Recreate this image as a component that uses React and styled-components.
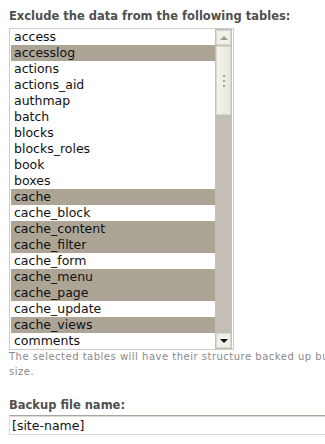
import React from 'react';
import styled, { createGlobalStyle } from 'styled-components';

const tables = [
  ['access', false],
  ['accesslog', true],
  ['actions', false],
  ['actions_aid', false],
  ['authmap', false],
  ['batch', false],
  ['blocks', false],
  ['blocks_roles', false],
  ['book', false],
  ['boxes', false],
  ['cache', true],
  ['cache_block', false],
  ['cache_content', true],
  ['cache_filter', true],
  ['cache_form', false],
  ['cache_menu', true],
  ['cache_page', true],
  ['cache_update', false],
  ['cache_views', true],
  ['comments', false],
];

const App = () => {
  return (
    <Page>
      <GlobalStyle />
      <Label>Exclude the data from the following tables:</Label>
      <ListBox>
        <Rows>
          {tables.map(([name, selected]) => (
            <Row key={name} selected={selected}>{name}</Row>
          ))}
        </Rows>
        <Scrollbar>
          <ScrollButton>
            <Arrow up />
          </ScrollButton>
          <Thumb>
            <Grip />
            <Grip />
            <Grip />
          </Thumb>
          <Track />
          <ScrollButton>
            <Arrow />
          </ScrollButton>
        </Scrollbar>
      </ListBox>
      <Description>
        <DescLine>The selected tables will have their structure backed up but not their contents. This is useful for excluding cache data to reduce file</DescLine>
        <DescLine>size.</DescLine>
      </Description>
      <Label second>Backup file name:</Label>
      <TextInput>[site-name]</TextInput>
    </Page>
  );
};

export default App;

const GlobalStyle = createGlobalStyle`
  body {
    margin: 0;
    background: #fff;
    overflow: hidden;
  }
`;

const Page = styled.div`
  padding: 7px 0 0 9px;
  width: 600px;
  font-family: "DejaVu Sans", Verdana, sans-serif;
`;

const Label = styled.div`
  font-size: 11.5px;
  font-weight: bold;
  line-height: 18px;
  color: #4f4f4f;
  margin: ${(p) => (p.second ? '17px 0 1px' : '0 0 3px')};
`;

const ListBox = styled.div`
  box-sizing: border-box;
  display: flex;
  width: 225px;
  height: 322px;
  border: 1px solid #cfccc3;
  padding: 0 1px;
  background: #fff;
`;

const Rows = styled.div`
  flex: 1;
  display: flex;
  flex-direction: column;
`;

const Row = styled.div`
  height: 16px;
  line-height: 16px;
  padding-left: 3px;
  font-size: 12.5px;
  color: #111;
  background: ${(p) => (p.selected ? '#aca596' : '#fff')};
  white-space: nowrap;
`;

const Scrollbar = styled.div`
  width: 17px;
  display: flex;
  flex-direction: column;
  background: #c3bfb4;
  box-sizing: border-box;
  padding: 1px 1px;
`;

const ScrollButton = styled.div`
  box-sizing: border-box;
  height: 15px;
  border: 1px solid #d9d6cd;
  background: #f1efea;
  display: flex;
  align-items: center;
  justify-content: center;
`;

const Arrow = styled.div`
  width: 0;
  height: 0;
  border-left: 4px solid transparent;
  border-right: 4px solid transparent;
  ${(p) =>
    p.up
      ? 'border-bottom: 4px solid #9a978f;'
      : 'border-top: 4px solid #111;'}
`;

const Thumb = styled.div`
  box-sizing: border-box;
  margin-top: 1px;
  height: 69px;
  border: 1px solid #d9d6cd;
  background: linear-gradient(to right, #f4f2ee, #e9e6e0);
  display: flex;
  flex-direction: column;
  align-items: center;
  justify-content: center;
  gap: 3px;
`;

const Grip = styled.div`
  width: 2px;
  height: 2px;
  background: #a7a398;
`;

const Track = styled.div`
  flex: 1;
`;

const Description = styled.div`
  font-size: 10px;
  letter-spacing: 0.5px;
  line-height: 15px;
  color: #8a8a8a;
  margin-top: -1px;
`;

const DescLine = styled.div`
  white-space: nowrap;
`;

const TextInput = styled.div`
  box-sizing: border-box;
  width: 360px;
  height: 20px;
  border: 1px solid #dcd9d1;
  border-top-color: #aaa69b;
  box-shadow: inset 0 1px 0 #dedbd3;
  padding: 1px 2px;
  font-size: 12.5px;
  line-height: 17px;
  color: #111;
`;
